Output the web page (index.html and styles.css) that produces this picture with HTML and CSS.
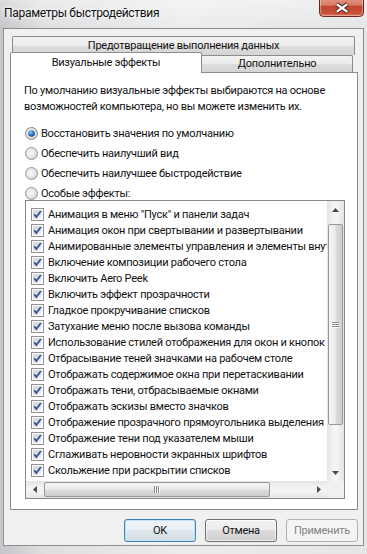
FILE: index.html
```html
<!DOCTYPE html>
<html lang="ru">
<head>
    <meta charset="UTF-8">
    <meta name="viewport" content="width=device-width, initial-scale=1.0">
    <title>Параметры быстродействия</title>
    <link rel="stylesheet" href="styles.css">
</head>
<body>
    <svg class="defs" width="0" height="0">
        <defs>
            <linearGradient id="chkfill" x1="0" y1="0" x2="1" y2="1">
                <stop offset="0" stop-color="#cdd1d6"/>
                <stop offset="1" stop-color="#f7f7f7"/>
            </linearGradient>
            <radialGradient id="radfill" cx="0.45" cy="0.45" r="0.6">
                <stop offset="0" stop-color="#fafafa"/>
                <stop offset="0.6" stop-color="#e6e6e6"/>
                <stop offset="1" stop-color="#c4c4c4"/>
            </radialGradient>
            <radialGradient id="dotfill" cx="0.4" cy="0.35" r="0.7">
                <stop offset="0" stop-color="#8fd3ff"/>
                <stop offset="0.5" stop-color="#2f7fcb"/>
                <stop offset="1" stop-color="#133f78"/>
            </radialGradient>
        </defs>
        <symbol id="chk" viewBox="0 0 13 13">
            <rect x="0.5" y="0.5" width="12" height="12" fill="#fff" stroke="#8e8f8f"/>
            <rect x="2" y="2" width="9" height="9" fill="url(#chkfill)"/>
            <path d="M3.2 6.4 L5.4 9 L9.9 3" fill="none" stroke="#3552a8" stroke-width="1.9"/>
        </symbol>
        <symbol id="rad" viewBox="0 0 13 13">
            <circle cx="6.5" cy="6.5" r="6" fill="url(#radfill)" stroke="#9a9a9a"/>
        </symbol>
        <symbol id="rad-on" viewBox="0 0 13 13">
            <circle cx="6.5" cy="6.5" r="6" fill="url(#radfill)" stroke="#8a8a8a"/>
            <circle cx="6.5" cy="6.5" r="3.3" fill="url(#dotfill)"/>
        </symbol>
    </svg>

    <div class="window">
        <div class="titlebar">
            <span class="title">Параметры быстродействия</span>
            <svg class="close" width="45" height="17" viewBox="0 0 45 17">
                <defs>
                    <linearGradient id="red" x1="0" y1="0" x2="0" y2="1">
                        <stop offset="0" stop-color="#e7a594"/>
                        <stop offset="0.45" stop-color="#d57a65"/>
                        <stop offset="0.5" stop-color="#c2452d"/>
                        <stop offset="0.85" stop-color="#c9533a"/>
                        <stop offset="1" stop-color="#e1836a"/>
                    </linearGradient>
                </defs>
                <rect x="0.5" y="-4" width="44" height="20.5" rx="4" fill="url(#red)" stroke="#6a2419"/>
                <rect x="1.5" y="-4" width="42" height="19.5" rx="3" fill="none" stroke="rgba(255,255,255,0.35)"/>
                <path d="M17.5 4 L28.5 12 M28.5 4 L17.5 12" stroke="#4a1d16" stroke-width="4.2"/>
                <path d="M17.8 4.3 L28.2 11.7 M28.2 4.3 L17.8 11.7" stroke="#fff" stroke-width="2.3"/>
            </svg>
        </div>

        <div class="dialog">
            <div class="tabs">
                <div class="tab-back">Предотвращение выполнения данных</div>
                <div class="tab-row">
                    <div class="tab-active">Визуальные эффекты</div>
                    <div class="tab-other">Дополнительно</div>
                </div>
            </div>

            <div class="panel">
                <p class="intro">По умолчанию визуальные эффекты выбираются на основе возможностей компьютера, но вы можете изменить их.</p>

                <div class="options">
                    <label class="option"><svg class="radio"><use href="#rad-on"/></svg>Восстановить значения по умолчанию</label>
                    <label class="option"><svg class="radio"><use href="#rad"/></svg>Обеспечить наилучший вид</label>
                    <label class="option"><svg class="radio"><use href="#rad"/></svg>Обеспечить наилучшее быстродействие</label>
                    <label class="option"><svg class="radio"><use href="#rad"/></svg>Особые эффекты:</label>
                </div>

                <div class="listbox">
                    <div class="list-main">
                        <div class="items">
                            <div class="item"><svg class="check"><use href="#chk"/></svg>Анимация в меню "Пуск" и панели задач</div>
                            <div class="item"><svg class="check"><use href="#chk"/></svg>Анимация окон при свертывании и развертывании</div>
                            <div class="item"><svg class="check"><use href="#chk"/></svg>Анимированные элементы управления и элементы внутри окна</div>
                            <div class="item"><svg class="check"><use href="#chk"/></svg>Включение композиции рабочего стола</div>
                            <div class="item"><svg class="check"><use href="#chk"/></svg>Включить Aero Peek</div>
                            <div class="item"><svg class="check"><use href="#chk"/></svg>Включить эффект прозрачности</div>
                            <div class="item"><svg class="check"><use href="#chk"/></svg>Гладкое прокручивание списков</div>
                            <div class="item"><svg class="check"><use href="#chk"/></svg>Затухание меню после вызова команды</div>
                            <div class="item"><svg class="check"><use href="#chk"/></svg>Использование стилей отображения для окон и кнопок</div>
                            <div class="item"><svg class="check"><use href="#chk"/></svg>Отбрасывание теней значками на рабочем столе</div>
                            <div class="item"><svg class="check"><use href="#chk"/></svg>Отображать содержимое окна при перетаскивании</div>
                            <div class="item"><svg class="check"><use href="#chk"/></svg>Отображать тени, отбрасываемые окнами</div>
                            <div class="item"><svg class="check"><use href="#chk"/></svg>Отображать эскизы вместо значков</div>
                            <div class="item"><svg class="check"><use href="#chk"/></svg>Отображение прозрачного прямоугольника выделения</div>
                            <div class="item"><svg class="check"><use href="#chk"/></svg>Отображение тени под указателем мыши</div>
                            <div class="item"><svg class="check"><use href="#chk"/></svg>Сглаживать неровности экранных шрифтов</div>
                            <div class="item"><svg class="check"><use href="#chk"/></svg>Скольжение при раскрытии списков</div>
                        </div>
                        <div class="vscroll">
                            <div class="arrow"><svg width="7" height="4" viewBox="0 0 7 4"><path d="M0 4 L3.5 0 L7 4 Z" fill="#4a4a4a"/></svg></div>
                            <div class="vthumb">
                                <svg width="7" height="6" viewBox="0 0 7 6"><path d="M0 0.5 H7 M0 2.5 H7 M0 4.5 H7" stroke="#8c8c8c"/><path d="M0 1.5 H7 M0 3.5 H7 M0 5.5 H7" stroke="#fafafa"/></svg>
                            </div>
                            <div class="vfill"></div>
                            <div class="arrow"><svg width="7" height="4" viewBox="0 0 7 4"><path d="M0 0 L3.5 4 L7 0 Z" fill="#4a4a4a"/></svg></div>
                        </div>
                    </div>
                    <div class="hscroll">
                        <div class="hbar">
                            <div class="arrow harrow"><svg width="4" height="7" viewBox="0 0 4 7"><path d="M4 0 L0 3.5 L4 7 Z" fill="#4a4a4a"/></svg></div>
                            <div class="hthumb">
                                <svg width="6" height="7" viewBox="0 0 6 7"><path d="M0.5 0 V7 M2.5 0 V7 M4.5 0 V7" stroke="#8c8c8c"/><path d="M1.5 0 V7 M3.5 0 V7 M5.5 0 V7" stroke="#fafafa"/></svg>
                            </div>
                            <div class="hfill"></div>
                            <div class="arrow harrow"><svg width="4" height="7" viewBox="0 0 4 7"><path d="M0 0 L4 3.5 L0 7 Z" fill="#4a4a4a"/></svg></div>
                        </div>
                        <div class="corner"></div>
                    </div>
                </div>
            </div>

            <div class="buttons">
                <button class="btn btn-default">OK</button>
                <button class="btn">Отмена</button>
                <button class="btn" disabled>Применить</button>
            </div>
        </div>
    </div>
</body>
</html>
```

FILE: styles.css
```css
* {
    box-sizing: border-box;
}
body {
    margin: 0;
    font-family: Roboto, "Liberation Sans", sans-serif;
    font-size: 11px;
    letter-spacing: -0.25px;
    color: #111;
}
.defs {
    position: absolute;
    width: 0;
    height: 0;
}
.window {
    width: 367px;
    height: 554px;
    display: flex;
    flex-direction: column;
    background: linear-gradient(90deg, #c4c6c9 0%, #dedfe1 12%, #ebeced 50%, #e4e5e7 100%);
}
.titlebar {
    height: 28px;
    flex-shrink: 0;
    display: flex;
    justify-content: space-between;
    align-items: flex-start;
    background: linear-gradient(180deg, rgba(255, 255, 255, 0.4), rgba(255, 255, 255, 0));
}
.title {
    padding-left: 4px;
    line-height: 26px;
    font-size: 12px;
    letter-spacing: -0.3px;
    text-shadow: 0 0 6px #fff, 0 0 3px #fff;
}
.close {
    display: block;
    margin-right: 3px;
}
.dialog {
    height: 518px;
    margin: 0 3px;
    border: 1px solid #8d8d8d;
    background: #f0f0f0;
    padding: 7px 5px 0 6px;
    display: flex;
    flex-direction: column;
}

/* tabs */
.tab-back {
    height: 19px;
    margin: 0 3px 0 2px;
    border: 1px solid #898c95;
    border-bottom: none;
    border-radius: 2px 2px 0 0;
    background: linear-gradient(#f3f3f3, #ebebeb 50%, #dddddd 50%, #d5d5d5);
    text-align: center;
    line-height: 17px;
}
.tab-row {
    display: flex;
    align-items: flex-start;
    margin-top: -3px;
}
.tab-active {
    position: relative;
    z-index: 1;
    width: 192px;
    height: 21px;
    margin-bottom: -1px;
    border: 1px solid #898c95;
    border-bottom: none;
    border-radius: 2px 2px 0 0;
    background: #fff;
    text-align: center;
    line-height: 19px;
}
.tab-other {
    width: 152px;
    height: 17px;
    margin: 3px 0 0 -1px;
    border: 1px solid #898c95;
    border-bottom: none;
    border-radius: 0 2px 0 0;
    background: linear-gradient(#f3f3f3, #ebebeb 50%, #dddddd 50%, #d5d5d5);
    text-align: center;
    line-height: 16px;
}
.panel {
    height: 438px;
    border: 1px solid #898c95;
    background: #fff;
    padding: 10px 12px 0 14px;
}
.intro {
    margin: 0 0 0 -1px;
    line-height: 16px;
}

/* radio options */
.options {
    display: flex;
    flex-direction: column;
    gap: 6px;
    margin-top: 11px;
}
.option {
    height: 14px;
    display: flex;
    align-items: center;
}
.radio {
    width: 13px;
    height: 13px;
    margin-right: 3px;
}

/* list */
.listbox {
    width: 320px;
    height: 299px;
    border: 1px solid #828790;
    display: flex;
    flex-direction: column;
}
.list-main {
    height: 280px;
    display: flex;
}
.items {
    flex: 1;
    overflow: hidden;
    padding-top: 5px;
    white-space: nowrap;
}
.item {
    height: 16px;
    display: flex;
    align-items: center;
}
.check {
    width: 13px;
    height: 13px;
    margin: 0 4px 0 5px;
    flex-shrink: 0;
}
.vscroll {
    width: 17px;
    display: flex;
    flex-direction: column;
    background: linear-gradient(90deg, #e4e4e4, #f4f4f4 40%, #f4f4f4 60%, #e4e4e4);
}
.arrow {
    height: 17px;
    flex-shrink: 0;
    display: flex;
    align-items: center;
    justify-content: center;
}
.vthumb {
    height: 201px;
    margin: 6px 1px 0;
    border: 1px solid #989898;
    border-radius: 2px;
    background: linear-gradient(90deg, #f4f4f4, #ececec 45%, #dcdcdc 55%, #cecece);
    display: flex;
    align-items: center;
    justify-content: center;
}
.vfill {
    flex: 1;
}
.hscroll {
    height: 17px;
    display: flex;
}
.hbar {
    flex: 1;
    display: flex;
    background: linear-gradient(#e4e4e4, #f4f4f4 40%, #f4f4f4 60%, #e4e4e4);
}
.harrow {
    width: 17px;
}
.hthumb {
    width: 226px;
    margin: 1px 0 1px 1px;
    border: 1px solid #989898;
    border-radius: 2px;
    background: linear-gradient(#f4f4f4, #ececec 45%, #dcdcdc 55%, #cecece);
    display: flex;
    align-items: center;
    justify-content: center;
}
.hfill {
    flex: 1;
}
.corner {
    width: 17px;
    background: #f0f0f0;
}

/* buttons */
.buttons {
    display: flex;
    justify-content: flex-end;
    gap: 9px;
    margin-top: 9px;
}
.btn {
    width: 72px;
    height: 23px;
    padding: 0;
    border: 1px solid #707070;
    border-radius: 3px;
    background: linear-gradient(#f2f2f2, #ebebeb 50%, #dddddd 50%, #cfcfcf);
    box-shadow: inset 0 0 0 1px rgba(255, 255, 255, 0.7);
    font-family: inherit;
    font-size: 11px;
    letter-spacing: -0.25px;
    color: #111;
}
.btn-default {
    border-color: #3c7fb1;
    box-shadow: inset 0 0 0 1px #bfe4f9;
    background: linear-gradient(#f2f5f7, #eaf0f3 50%, #dde6eb 50%, #d2dde3);
}
.btn:disabled {
    border-color: #adb2b5;
    background: #f4f4f4;
    box-shadow: none;
    color: #838383;
}
```
